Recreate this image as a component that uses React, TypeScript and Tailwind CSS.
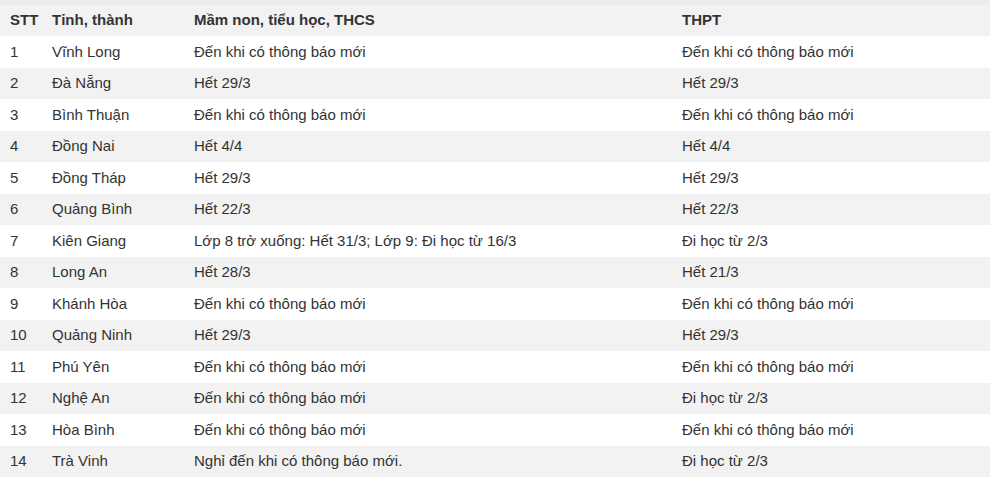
import React from 'react';

const rows: [string, string, string, string][] = [
  ['1', 'Vĩnh Long', 'Đến khi có thông báo mới', 'Đến khi có thông báo mới'],
  ['2', 'Đà Nẵng', 'Hết 29/3', 'Hết 29/3'],
  ['3', 'Bình Thuận', 'Đến khi có thông báo mới', 'Đến khi có thông báo mới'],
  ['4', 'Đồng Nai', 'Hết 4/4', 'Hết 4/4'],
  ['5', 'Đồng Tháp', 'Hết 29/3', 'Hết 29/3'],
  ['6', 'Quảng Bình', 'Hết 22/3', 'Hết 22/3'],
  ['7', 'Kiên Giang', 'Lớp 8 trở xuống: Hết 31/3; Lớp 9: Đi học từ 16/3', 'Đi học từ 2/3'],
  ['8', 'Long An', 'Hết 28/3', 'Hết 21/3'],
  ['9', 'Khánh Hòa', 'Đến khi có thông báo mới', 'Đến khi có thông báo mới'],
  ['10', 'Quảng Ninh', 'Hết 29/3', 'Hết 29/3'],
  ['11', 'Phú Yên', 'Đến khi có thông báo mới', 'Đến khi có thông báo mới'],
  ['12', 'Nghệ An', 'Đến khi có thông báo mới', 'Đi học từ 2/3'],
  ['13', 'Hòa Bình', 'Đến khi có thông báo mới', 'Đến khi có thông báo mới'],
  ['14', 'Trà Vinh', 'Nghỉ đến khi có thông báo mới.', 'Đi học từ 2/3'],
];

const cols = 'grid grid-cols-[42px_142px_488px_1fr] items-center h-[31.5px]';

export default function App() {
  return (
    <div className="w-[1000px] h-[481px] bg-white overflow-hidden text-[15px] text-[#333] font-['Liberation_Sans',Arial,sans-serif]">
      <div className="w-[990px] h-[4.5px] bg-[#ececec]" />
      <div className="w-[990px]">
        <div className={`${cols} bg-[#f2f2f2] font-bold`}>
          <div className="pl-[10px]">STT</div>
          <div className="pl-[10px]">Tỉnh, thành</div>
          <div className="pl-[10px]">Mầm non, tiểu học, THCS</div>
          <div className="pl-[10px]">THPT</div>
        </div>
        {rows.map((r, i) => (
          <div key={r[0]} className={`${cols} ${i % 2 === 1 ? 'bg-[#f2f2f2]' : 'bg-white'}`}>
            <div className="pl-[10px]">{r[0]}</div>
            <div className="pl-[10px]">{r[1]}</div>
            <div className="pl-[10px] whitespace-nowrap">{r[2]}</div>
            <div className="pl-[10px] whitespace-nowrap">{r[3]}</div>
          </div>
        ))}
      </div>
    </div>
  );
}
